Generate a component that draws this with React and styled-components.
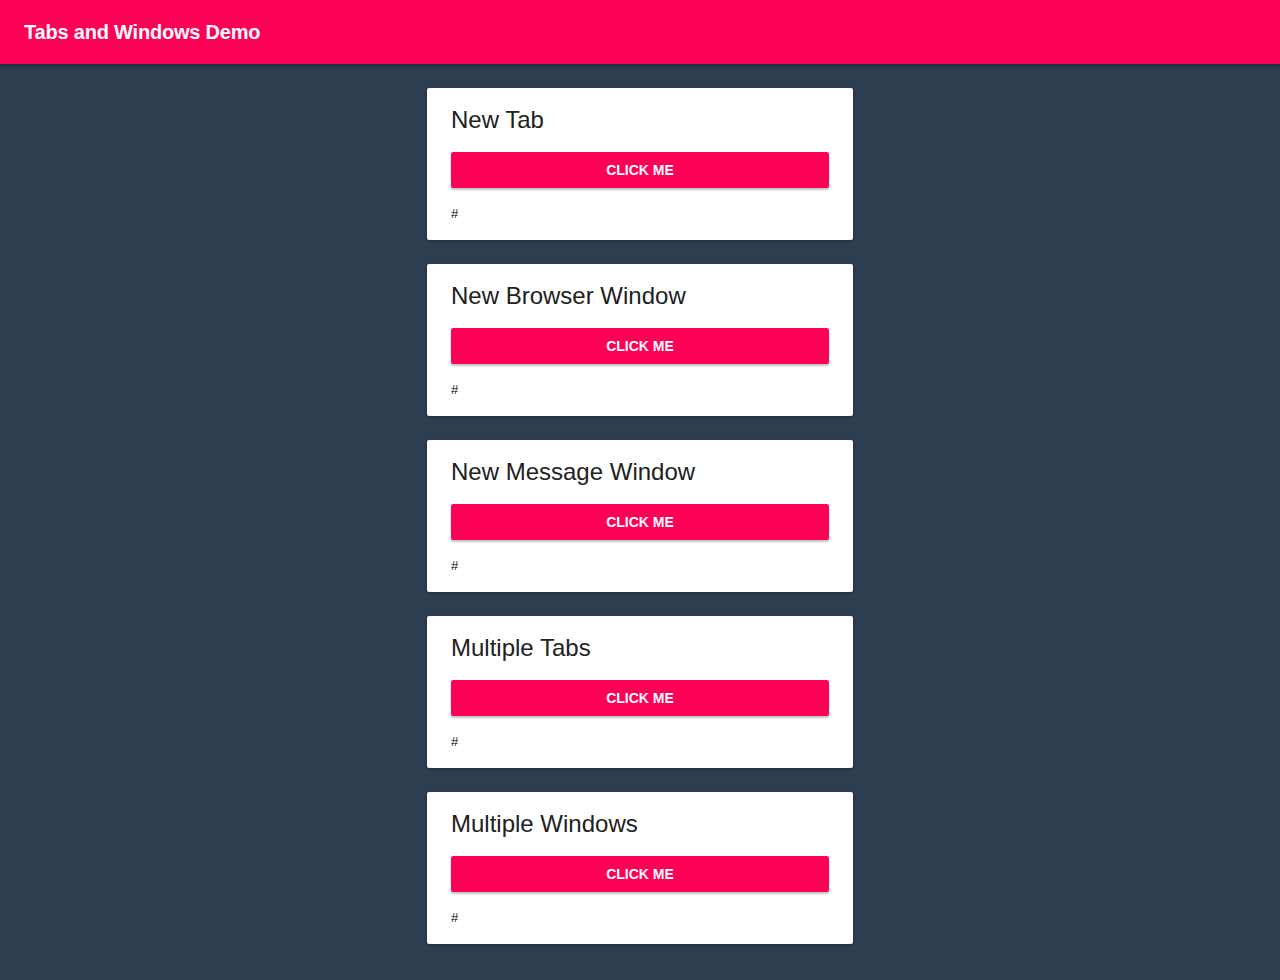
import React from "react";
import styled, { createGlobalStyle } from "styled-components";

const GlobalStyle = createGlobalStyle`
  html, body {
    margin: 0;
    padding: 0;
    background: #2c3e50;
    font-family: "Liberation Sans", Arial, sans-serif;
  }
`;

const items = [
  "New Tab",
  "New Browser Window",
  "New Message Window",
  "Multiple Tabs",
  "Multiple Windows",
];

function App() {
  return (
    <Page>
      <GlobalStyle />
      <Toolbar>
        <Title>Tabs and Windows Demo</Title>
      </Toolbar>
      <List>
        {items.map((name) => (
          <Card key={name}>
            <CardTitle>{name}</CardTitle>
            <Button>Click me</Button>
            <Result>#</Result>
          </Card>
        ))}
      </List>
    </Page>
  );
}

const Page = styled.div`
  min-height: 980px;
  background: #2c3e50;
`;

const Toolbar = styled.header`
  height: 64px;
  background: #ff0057;
  display: flex;
  align-items: center;
  padding: 0 24px;
  box-shadow: 0 2px 4px rgba(0, 0, 0, 0.3);
  position: relative;
`;

const Title = styled.h1`
  margin: 0;
  font-size: 20px;
  font-weight: 700;
  letter-spacing: -0.2px;
  color: #fff;
`;

const List = styled.main`
  display: flex;
  flex-direction: column;
  align-items: center;
  gap: 24px;
  padding: 24px 0;
`;

const Card = styled.section`
  width: 426px;
  box-sizing: border-box;
  background: #fff;
  border-radius: 2px;
  padding: 16px 24px;
  display: flex;
  flex-direction: column;
  box-shadow: 0 1px 3px rgba(0, 0, 0, 0.3);
`;

const CardTitle = styled.h2`
  margin: 0;
  font-size: 24px;
  line-height: 32px;
  font-weight: 400;
  color: #212121;
`;

const Button = styled.button`
  margin-top: 16px;
  height: 36px;
  border: none;
  border-radius: 2px;
  background: #ff0057;
  color: #fff;
  font-family: inherit;
  font-size: 14px;
  font-weight: 700;
  text-transform: uppercase;
  box-shadow: 0 2px 2px rgba(0, 0, 0, 0.24);
  cursor: pointer;
`;

const Result = styled.p`
  margin: 16px 0 0;
  font-size: 13px;
  line-height: 20px;
  color: #000;
`;

export default App;
